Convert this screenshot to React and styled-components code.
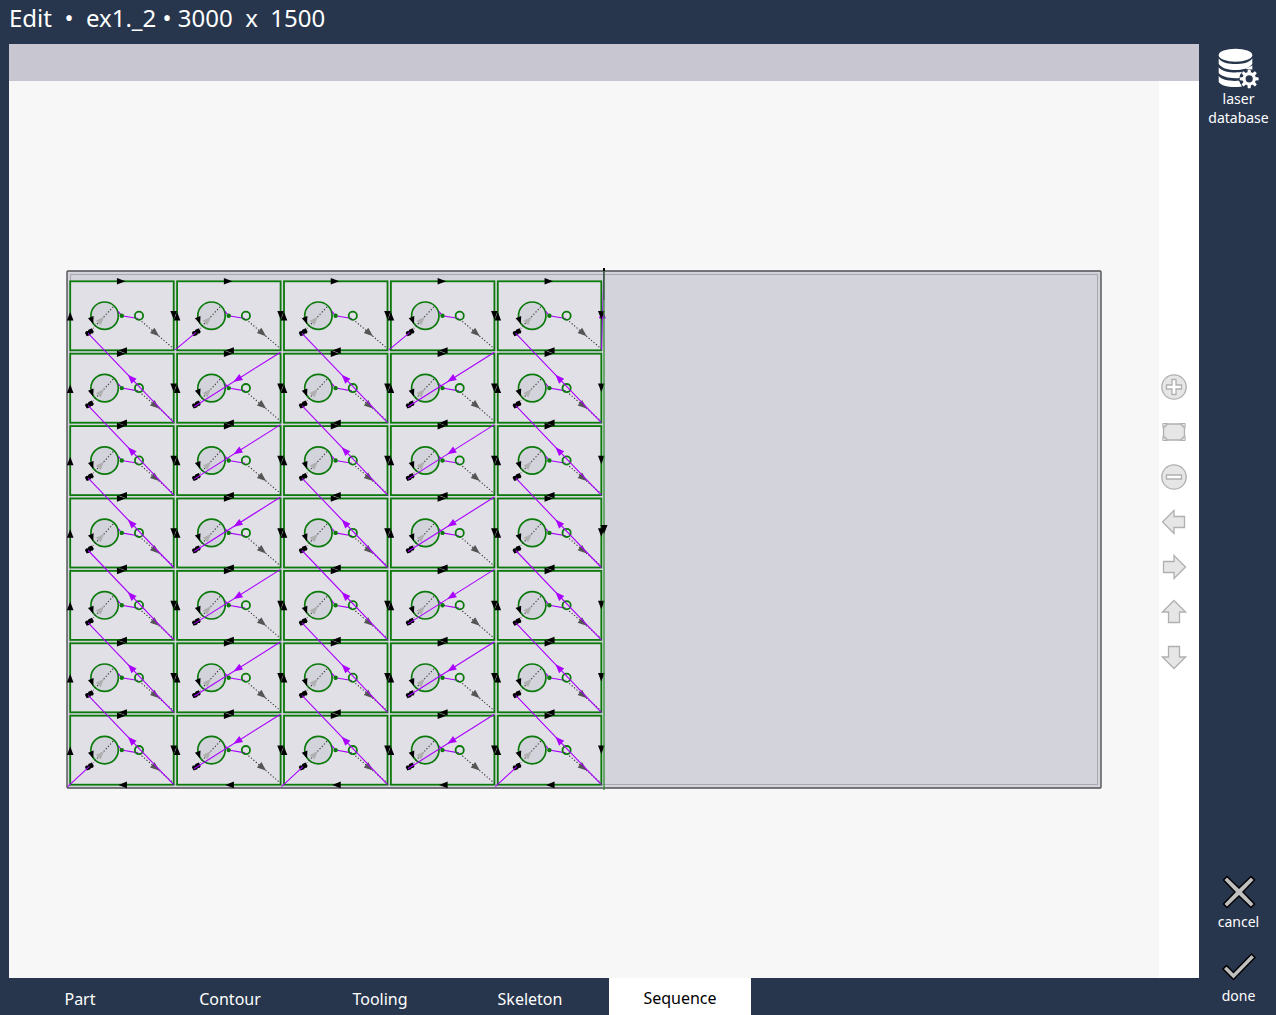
import React, { useState } from "react";
import styled, { createGlobalStyle } from "styled-components";

const GlobalStyle = createGlobalStyle`
  *, *::before, *::after { box-sizing: border-box; }
  body {
    margin: 0;
    background: #27364d;
    font-family: "Noto Sans", "Open Sans", sans-serif;
  }
`;

const Page = styled.div`
  display: grid;
  grid-template-columns: minmax(0, 1fr) 77px;
  grid-template-rows: 44px minmax(0, 1fr);
  height: 100vh;
  background: #27364d;
  color: #fff;
`;

const Header = styled.header`
  grid-column: 1 / -1;
  padding: 1px 9px 0;
`;

const Title = styled.h1`
  margin: 0;
  font-size: 24px;
  font-weight: 400;
  line-height: 33px;
  white-space: pre;
`;

const Main = styled.main`
  display: flex;
  flex-direction: column;
  min-height: 0;
  padding-left: 9px;
`;

const Toolbar = styled.div`
  flex: none;
  height: 37px;
  background: #c8c7d1;
`;

const Workspace = styled.div`
  flex: 1;
  display: flex;
  min-height: 0;
  background: #f7f7f7;
`;

const Canvas = styled.svg`
  flex: 1;
  min-width: 0;
  height: 100%;
`;

const ViewTools = styled.div`
  flex: none;
  display: flex;
  flex-direction: column;
  justify-content: center;
  width: 40px;
  padding-bottom: 16px;
  background: #fff;
`;

const ViewButton = styled.button`
  display: flex;
  align-items: center;
  justify-content: center;
  width: 30px;
  height: 45px;
  padding: 0;
  border: 0;
  background: none;
  cursor: pointer;

  svg {
    fill: #e6e6e6;
    stroke: #b0b0b0;
    stroke-width: 1.3;
  }
`;

const Tabs = styled.nav`
  flex: none;
  display: flex;
  gap: 8px;
  height: 37px;
`;

const Tab = styled.button`
  width: 142px;
  padding: ${(p) => (p.$active ? 2 : 4)}px 0 0;
  border: 0;
  background: ${(p) => (p.$active ? "#fff" : "transparent")};
  color: ${(p) => (p.$active ? "#000" : "#fff")};
  font: 400 16px/22px "Noto Sans", "Open Sans", sans-serif;
  cursor: pointer;
`;

const Sidebar = styled.aside`
  display: flex;
  flex-direction: column;
  justify-content: space-between;
  padding: 3px 0 10px 2px;
`;

const ActionGroup = styled.div`
  display: flex;
  flex-direction: column;
  gap: 20px;
`;

const Action = styled.button`
  display: flex;
  flex-direction: column;
  align-items: center;
  gap: ${(p) => p.$gap || 0}px;
  width: 100%;
  padding: 0;
  border: 0;
  background: none;
  color: #fff;
  font: 400 14px/19px "Noto Sans", "Open Sans", sans-serif;
  cursor: pointer;
`;

const COLS = 5;
const ROWS = 7;
const PITCH_X = 106.9;
const PITCH_Y = 72.4;
const ORIGIN_X = 70.2;
const ORIGIN_Y = 281.3;
const CELL_W = 103.5;
const CELL_H = 69;
const GREEN = "#0b7a0b";
const PURPLE = "#aa00ff";

function Arrow({ x, y, angle, fill = "#000", size = 8.5 }) {
  const h = size / 2;
  return (
    <path
      d={`M${h} 0L${-h} ${-h * 0.78}V${h * 0.78}Z`}
      transform={`translate(${x} ${y}) rotate(${angle})`}
      fill={fill}
    />
  );
}

function Travel({ x1, y1, x2, y2, arrow }) {
  const angle = (Math.atan2(y2 - y1, x2 - x1) * 180) / Math.PI;
  return (
    <g>
      <path d={`M${x1} ${y1}L${x2} ${y2}`} stroke={PURPLE} strokeWidth="1.1" />
      {arrow && (
        <Arrow x={(x1 + x2) / 2} y={(y1 + y2) / 2} angle={angle} fill={PURPLE} size={9} />
      )}
    </g>
  );
}

function Cell({ row, col }) {
  return (
    <g transform={`translate(${ORIGIN_X + col * PITCH_X} ${ORIGIN_Y + row * PITCH_Y})`} fill="none">
      <rect width={CELL_W} height={CELL_H} fill="#e0e0e6" stroke={GREEN} strokeWidth="1.8" />
      <circle cx="34.4" cy="34.4" r="13.7" fill="#d3d3dc" stroke={GREEN} strokeWidth="1.7" />
      <path d="M43 25.5L23 47M69 38L103.5 67.5" stroke="#333" strokeWidth="1.1" strokeDasharray="1.2 2" />
      <Arrow x={31} y={38.5} angle={-47} fill="#b0b0b0" />
      <Arrow x={85.5} y={52} angle={40} fill="#555" size={9} />
      <path d="M48 30L51.5 34.4L68 37.2" stroke={PURPLE} strokeWidth="1.1" />
      <circle cx="51.6" cy="34.4" r="2.2" fill={GREEN} />
      <circle cx="68.8" cy="34.4" r="4.1" stroke={GREEN} strokeWidth="1.8" />
      <path d="M17.8 37L23.4 34.8L23 42.8Z" fill="#000" />
      <path
        d="M-4.2 -1.5L-2.5 -2.6L-0.6 -1.8L0.4 -2.8L4.2 -2.4V1.5L2.6 2.6L0.8 1.8L-0.4 2.8L-4.2 2.2Z"
        transform="translate(19.2 51) rotate(-28)"
        fill="#000"
      />
    </g>
  );
}

function CellArrows({ row, col }) {
  const x = ORIGIN_X + col * PITCH_X;
  const y = ORIGIN_Y + row * PITCH_Y;
  return (
    <g>
      <Arrow x={x + 51} y={y} angle={0} />
      <Arrow x={x + CELL_W} y={y + 34} angle={90} />
      <Arrow x={x + 52.5} y={y + CELL_H + 0.2} angle={180} />
      <Arrow x={x} y={y + 35} angle={-90} />
    </g>
  );
}

function CellTravel({ row, col }) {
  const x = ORIGIN_X + col * PITCH_X;
  const y = ORIGIN_Y + row * PITCH_Y;
  if (col % 2 === 1) {
    return row === 0 ? (
      <Travel x1={x - 2} y1={y + 68.5} x2={x + 19} y2={y + 51} />
    ) : (
      <Travel x1={x + CELL_W} y1={y - 1.5} x2={x + 17} y2={y + 53} arrow />
    );
  }
  return (
    <g>
      {row > 0 && (
        <Travel x1={x + CELL_W} y1={y + CELL_H} x2={x + 18} y2={y + 52 - PITCH_Y} arrow />
      )}
      {row === ROWS - 1 && (
        <Travel x1={x - 2.5} y1={y + CELL_H + 2} x2={x + 19} y2={y + 51} />
      )}
    </g>
  );
}

const CELLS = Array.from({ length: ROWS * COLS }, (_, i) => ({
  row: Math.floor(i / COLS),
  col: i % COLS,
}));

function SheetDrawing() {
  return (
    <Canvas viewBox="9 81 1150 897" fill="none" role="img" aria-label="Cutting sequence">
      <rect x="67" y="271" width="1034" height="517" rx="1" fill="#d3d3dc" stroke="#505055" strokeWidth="1.4" />
      <rect x="70.5" y="274.5" width="1027" height="510" stroke="#a8a8ae" />
      {CELLS.map((c) => <Cell key={`${c.row}-${c.col}`} {...c} />)}
      {CELLS.map((c) => <CellTravel key={`${c.row}-${c.col}`} {...c} />)}
      <path d="M603.8 272L601.5 350" stroke={PURPLE} />
      <Arrow x={602.5} y={314} angle={-88} fill={PURPLE} size={9} />
      {CELLS.map((c) => <CellArrows key={`${c.row}-${c.col}`} {...c} />)}
      <path d="M604 271V790" stroke="#308c30" strokeOpacity=".7" strokeWidth="1.8" />
      <path d="M604 268V271" stroke="#000" strokeWidth="2" />
      <path d="M604 271V300" stroke="#222" strokeOpacity=".6" />
      <Arrow x={604} y={529.5} angle={90} size={9} />
    </Canvas>
  );
}

const ARROW_SHAPE = "M1.5 13L13 1.5V7.5H23.5V18.5H13V24.5Z";

function ArrowIcon({ turn }) {
  return (
    <svg width="26" height="26" viewBox="0 0 26 26" aria-hidden="true">
      <path d={ARROW_SHAPE} transform={`rotate(${turn} 13 13)`} />
    </svg>
  );
}

function ZoomIcon({ d }) {
  return (
    <svg width="26" height="26" viewBox="0 0 26 26" aria-hidden="true">
      <circle cx="13" cy="13" r="12.2" />
      <path d={d} fill="#fff" />
    </svg>
  );
}

function FitIcon() {
  return (
    <svg width="26" height="26" viewBox="0 0 26 26" aria-hidden="true">
      <path d="M6.5 5H19.5L23.5 9V17L19.5 21H6.5L2.5 17V9Z" />
      <path
        d="M1.8 8.5V4.5H6.5ZM24.2 8.5V4.5H19.5ZM1.8 17.5V21.5H6.5ZM24.2 17.5V21.5H19.5Z"
        strokeWidth="1"
      />
    </svg>
  );
}

const VIEW_TOOLS = [
  ["Zoom in", <ZoomIcon d="M11 5.5H15V11H20.5V15H15V20.5H11V15H5.5V11H11Z" />],
  ["Fit to window", <FitIcon />],
  ["Zoom out", <ZoomIcon d="M5.5 11H20.5V15H5.5Z" />],
  ["Pan left", <ArrowIcon turn={0} />],
  ["Pan right", <ArrowIcon turn={180} />],
  ["Pan up", <ArrowIcon turn={90} />],
  ["Pan down", <ArrowIcon turn={270} />],
];

const TEETH = [0, 45, 90, 135, 180, 225, 270, 315];

function DatabaseIcon() {
  return (
    <svg width="42" height="42" viewBox="0 -1 42 42" aria-hidden="true">
      <g fill="#fff">
        <ellipse cx="17.5" cy="7.2" rx="16.8" ry="6.5" />
        <path d="M.7 10.5C4 15 11 16 17.5 16S31 15 34.3 10.5V16C31 20.5 24 22 17.5 22S4 20.5 .7 16Z" />
        <path d="M.7 19.2C4 23.3 11 24.5 17.5 24.5C20 24.5 23 24.3 25 23.6L22 30C12 30.8 4 28.8 .7 25Z" />
        <path d="M.7 28C4 32 11 33.3 21 32.8L24 38.5C13 40.2 3 37.8 .7 34Z" />
        <path d="M27 21L34.3 17.5V22Z" />
      </g>
      <circle cx="31.2" cy="30.8" r="9.9" fill="#27364d" />
      <circle cx="31.2" cy="30.8" r="5.2" fill="none" stroke="#fff" strokeWidth="3.2" />
      {TEETH.map((a) => (
        <path key={a} d="M-1.8 -6L-1.4 -9.4H1.4L1.8 -6Z" fill="#fff" transform={`translate(31.2 30.8) rotate(${a})`} />
      ))}
    </svg>
  );
}

function CancelIcon() {
  return (
    <svg width="34" height="34" viewBox="0 0 34 34" aria-hidden="true">
      <path
        d="M5 1.5L17 13L29 1.5L32.5 5L21 17L32.5 29L29 32.5L17 21L5 32.5L1.5 29L13 17L1.5 5Z"
        fill="#c0c0c0"
        stroke="#000"
        strokeWidth="1.5"
      />
    </svg>
  );
}

function DoneIcon() {
  return (
    <svg width="36" height="32" viewBox="0 0 36 32" aria-hidden="true">
      <path
        d="M2 18L5.5 14.5L12.5 21.5L30.5 3L34 6.5L12.5 28.5Z"
        fill="#c0c0c0"
        stroke="#000"
        strokeWidth="1.5"
      />
    </svg>
  );
}

const TABS = ["Part", "Contour", "Tooling", "Skeleton", "Sequence"];

export default function App() {
  const [active, setActive] = useState("Sequence");
  return (
    <>
      <GlobalStyle />
      <Page>
        <Header>
          <Title>{"Edit  •  ex1._2 • 3000  x  1500"}</Title>
        </Header>
        <Main>
          <Toolbar />
          <Workspace>
            <SheetDrawing />
            <ViewTools>
              {VIEW_TOOLS.map(([label, icon]) => (
                <ViewButton key={label} type="button" aria-label={label}>
                  {icon}
                </ViewButton>
              ))}
            </ViewTools>
          </Workspace>
          <Tabs>
            {TABS.map((name) => (
              <Tab key={name} type="button" $active={name === active} onClick={() => setActive(name)}>
                {name}
              </Tab>
            ))}
          </Tabs>
        </Main>
        <Sidebar>
          <Action type="button">
            <DatabaseIcon />
            <span>laser<br />database</span>
          </Action>
          <ActionGroup>
            <Action type="button" $gap={3}>
              <CancelIcon />
              cancel
            </Action>
            <Action type="button" $gap={3}>
              <DoneIcon />
              done
            </Action>
          </ActionGroup>
        </Sidebar>
      </Page>
    </>
  );
}
